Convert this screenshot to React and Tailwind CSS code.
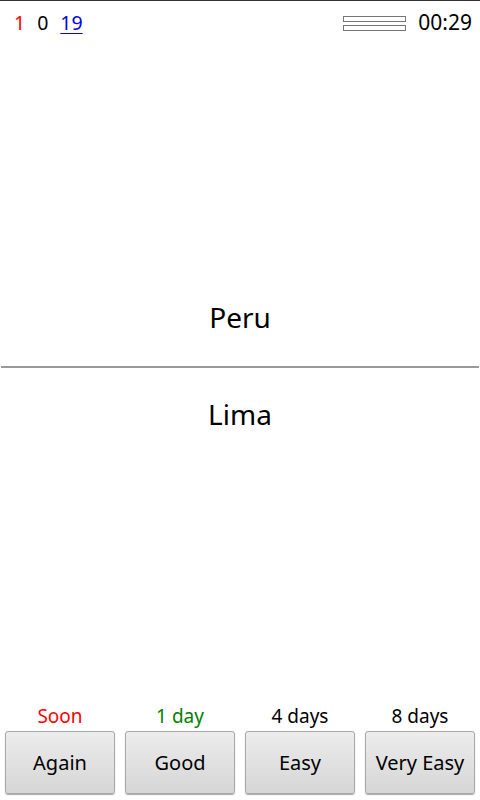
import React from "react";

const answers = [
  { label: "Again", interval: "Soon", color: "text-[#ff0000]" },
  { label: "Good", interval: "1 day", color: "text-[#008000]" },
  { label: "Easy", interval: "4 days", color: "text-black" },
  { label: "Very Easy", interval: "8 days", color: "text-black" },
];

export default function App() {
  return (
    <div
      className="flex h-[800px] w-[480px] flex-col overflow-hidden bg-white text-black"
      style={{ fontFamily: '"Noto Sans", "Open Sans", sans-serif' }}
    >
      <div className="h-px shrink-0 bg-[#333]" />

      {/* counts + progress + timer */}
      <div className="flex h-[43px] shrink-0 items-center justify-between pl-[14px] pr-[8px] text-[19.5px]">
        <div className="flex items-center gap-[12px] leading-none">
          <span className="text-[#ff0000]">1</span>
          <span>0</span>
          <span className="text-[#0000ff] underline underline-offset-[3px]">19</span>
        </div>
        <div className="flex items-center gap-[12px]">
          <div className="flex flex-col gap-[3px] pt-px">
            <div className="h-[6px] w-[63px] border border-[#777]" />
            <div className="h-[6px] w-[63px] border border-[#777]" />
          </div>
          <span className="text-[21px] leading-none">00:29</span>
        </div>
      </div>

      {/* question */}
      <div className="flex h-[322px] shrink-0 items-end justify-center pb-[30px]">
        <span className="text-[28px] leading-[38px]">Peru</span>
      </div>

      <div className="mx-px h-[2px] shrink-0 bg-[#999]" />

      {/* answer */}
      <div className="flex flex-1 justify-center pt-[27px]">
        <span className="text-[28px] leading-[38px]">Lima</span>
      </div>

      {/* ease buttons */}
      <div className="shrink-0 px-[5px] pb-[6px]">
        <div className="grid grid-cols-4 gap-[10px]">
          {answers.map((a) => (
            <div key={a.label} className="flex flex-col items-center">
              <span className={`mb-[2px] text-[19px] leading-[26px] ${a.color}`}>{a.interval}</span>
              <button className="flex h-[63px] w-full items-center justify-center rounded-[3px] border border-[#a8a8a8] bg-gradient-to-b from-[#ececec] to-[#d6d6d6] text-[20px] shadow-[0_1px_1px_rgba(0,0,0,0.35)]">
                {a.label}
              </button>
            </div>
          ))}
        </div>
      </div>
    </div>
  );
}
